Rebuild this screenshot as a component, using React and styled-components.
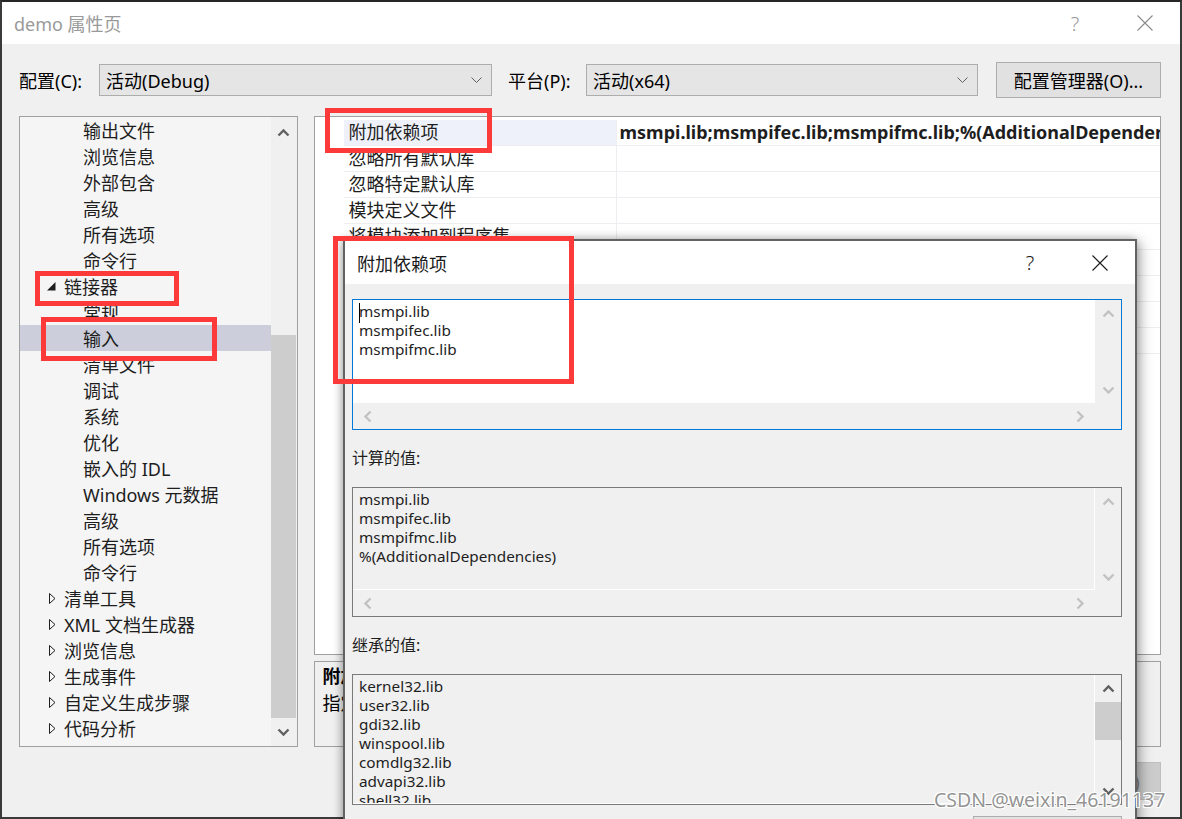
import React from 'react'
import styled, { createGlobalStyle } from 'styled-components'

const GlobalStyle = createGlobalStyle`
  html, body {
    margin: 0;
    padding: 0;
    width: 1182px;
    height: 819px;
    overflow: hidden;
    background: #2d2d2d;
  }
  body {
    font-family: "Noto Sans", "Noto Sans CJK SC", sans-serif;
    color: #000;
  }
`;

const treeItems = [
  { label: '输出文件', level: 1 },
  { label: '浏览信息', level: 1 },
  { label: '外部包含', level: 1 },
  { label: '高级', level: 1 },
  { label: '所有选项', level: 1 },
  { label: '命令行', level: 1 },
  { label: '链接器', level: 0, open: true },
  { label: '常规', level: 1 },
  { label: '输入', level: 1, selected: true },
  { label: '清单文件', level: 1 },
  { label: '调试', level: 1 },
  { label: '系统', level: 1 },
  { label: '优化', level: 1 },
  { label: '嵌入的 IDL', level: 1 },
  { label: 'Windows 元数据', level: 1 },
  { label: '高级', level: 1 },
  { label: '所有选项', level: 1 },
  { label: '命令行', level: 1 },
  { label: '清单工具', level: 0 },
  { label: 'XML 文档生成器', level: 0 },
  { label: '浏览信息', level: 0 },
  { label: '生成事件', level: 0 },
  { label: '自定义生成步骤', level: 0 },
  { label: '代码分析', level: 0 },
];

const gridRows = [
  { name: '附加依赖项', value: 'msmpi.lib;msmpifec.lib;msmpifmc.lib;%(AdditionalDependencies)', current: true },
  { name: '忽略所有默认库' },
  { name: '忽略特定默认库' },
  { name: '模块定义文件' },
  { name: '将模块添加到程序集' },
  { name: '嵌入托管资源文件' },
  { name: '强制符号引用' },
  { name: '延迟加载的 DLL' },
  { name: '程序集链接资源' },
];

const editLines = ['msmpi.lib', 'msmpifec.lib', 'msmpifmc.lib'];
const computedLines = ['msmpi.lib', 'msmpifec.lib', 'msmpifmc.lib', '%(AdditionalDependencies)'];
const inheritedLines = ['kernel32.lib', 'user32.lib', 'gdi32.lib', 'winspool.lib', 'comdlg32.lib', 'advapi32.lib', 'shell32.lib', 'ole32.lib'];

const marks = [
  { x: 325, y: 108, w: 167, h: 45 },
  { x: 35, y: 271, w: 144, h: 35 },
  { x: 41, y: 317, w: 176, h: 44 },
  { x: 333, y: 236, w: 241, h: 148 },
];

function Chevron({ dir, color }) {
  const paths = {
    up: 'M1.5 7.5 L6.5 2.5 L11.5 7.5',
    down: 'M1.5 2.5 L6.5 7.5 L11.5 2.5',
    left: 'M7.5 1.5 L2.5 6.5 L7.5 11.5',
    right: 'M2.5 1.5 L7.5 6.5 L2.5 11.5',
  };
  const horiz = dir === 'left' || dir === 'right';
  return (
    <svg width={horiz ? 10 : 13} height={horiz ? 13 : 10} viewBox={horiz ? '0 0 10 13' : '0 0 13 10'}>
      <path d={paths[dir]} fill="none" stroke={color} strokeWidth="2.4" />
    </svg>
  );
}

function CloseGlyph({ color }) {
  return (
    <svg width="16" height="16" viewBox="0 0 16 16">
      <path d="M0.5 0.5 L15.5 15.5 M15.5 0.5 L0.5 15.5" stroke={color} strokeWidth="1.1" fill="none" />
    </svg>
  );
}

function ComboArrow() {
  return (
    <svg width="11" height="7" viewBox="0 0 11 7">
      <path d="M0.5 0.5 L5.5 5.5 L10.5 0.5" stroke="#606060" strokeWidth="1" fill="none" />
    </svg>
  );
}

function TreeArrow({ open }) {
  if (open) {
    return (
      <svg width="9" height="9" viewBox="0 0 9 9">
        <path d="M0 8.5 L8.5 8.5 L8.5 0 Z" fill="#1e1e1e" />
      </svg>
    );
  }
  return (
    <svg width="7" height="11" viewBox="0 0 7 11">
      <path d="M0.5 0.5 L6 5.5 L0.5 10.5 Z" fill="none" stroke="#1e1e1e" strokeWidth="1" />
    </svg>
  );
}

function ValueBox({ focused, disabled, lines, textHeight, hscroll, thumb, arrowColor }) {
  return (
    <Box $focused={focused} $disabled={disabled} $textHeight={textHeight} $hscroll={hscroll}>
      <BoxText $disabled={disabled}>
        {focused && <Caret />}
        {lines.map((l, i) => <div key={i}>{l}</div>)}
      </BoxText>
      <VScroll>
        <VArrow><Chevron dir="up" color={arrowColor} /></VArrow>
        {thumb ? <BoxThumb style={{ height: thumb }} /> : null}
        <VSpacer />
        <VArrow><Chevron dir="down" color={arrowColor} /></VArrow>
      </VScroll>
      {hscroll && (
        <>
          <HScroll>
            <Chevron dir="left" color="#c2c2c2" />
            <Chevron dir="right" color="#c2c2c2" />
          </HScroll>
          <Corner />
        </>
      )}
    </Box>
  );
}

function App() {
  return (
    <Screen>
      <GlobalStyle />
      <Window>
        <TitleBar>
          <TitleText>demo 属性页</TitleText>
          <TitleButton $inactive>?</TitleButton>
          <TitleButton><CloseGlyph color="#8a8a8a" /></TitleButton>
        </TitleBar>
        <Body>
          <ConfigRow>
            <FieldLabel $w={80}>配置(C):</FieldLabel>
            <Combo $w={393}>
              <span>活动(Debug)</span>
              <ComboArrow />
            </Combo>
            <FieldLabel $w={78} $gap={16}>平台(P):</FieldLabel>
            <Combo $w={392}>
              <span>活动(x64)</span>
              <ComboArrow />
            </Combo>
            <PushButton $w={165} $h={36} $ml={18}>配置管理器(O)...</PushButton>
          </ConfigRow>
          <Content>
            <Tree>
              <TreeList>
                {treeItems.map((item, i) => (
                  <TreeItem key={i} $level={item.level} $selected={item.selected}>
                    {item.level === 0 && (
                      <ArrowSlot $open={item.open}><TreeArrow open={item.open} /></ArrowSlot>
                    )}
                    {item.label}
                  </TreeItem>
                ))}
              </TreeList>
              <TreeScroll>
                <TreeScrollBtn $h={32}><Chevron dir="up" color="#606060" /></TreeScrollBtn>
                <TreeThumb $top={186} $h={383} />
                <TreeScrollBtn $grow><Chevron dir="down" color="#606060" /></TreeScrollBtn>
              </TreeScroll>
            </Tree>
            <RightColumn>
              <Grid>
                {gridRows.map((row, i) => (
                  <GridRow key={i}>
                    <Gutter />
                    <NameCell $current={row.current}>{row.name}</NameCell>
                    <ValueCell>{row.value || ''}</ValueCell>
                  </GridRow>
                ))}
              </Grid>
              <Description>
                <DescTitle>附加依赖项</DescTitle>
                <DescText>指定要添加到链接命令行的附加项。[例如 kernel32.lib]</DescText>
              </Description>
            </RightColumn>
          </Content>
          <ButtonRow>
            <PushButton $w={101} $h={38}>确定</PushButton>
            <PushButton $w={101} $h={38}>取消</PushButton>
            <PushButton $w={101} $h={38} $disabled>应用(A)</PushButton>
          </ButtonRow>
        </Body>
      </Window>

      <Dialog>
        <DialogTitleBar>
          <DialogTitle>附加依赖项</DialogTitle>
          <TitleButton $dark>?</TitleButton>
          <TitleButton><CloseGlyph color="#1a1a1a" /></TitleButton>
        </DialogTitleBar>
        <DialogBody>
          <ValueBox focused lines={editLines} textHeight={103} hscroll arrowColor="#c2c2c2" />
          <SectionLabel>计算的值:</SectionLabel>
          <ValueBox disabled lines={computedLines} textHeight={102} hscroll arrowColor="#c2c2c2" />
          <SectionLabel>继承的值:</SectionLabel>
          <ValueBox disabled lines={inheritedLines} textHeight={129} thumb={38} arrowColor="#606060" />
          <DialogButtons>
            <PushButton $w={149} $h={38}>确定</PushButton>
          </DialogButtons>
        </DialogBody>
      </Dialog>

      {marks.map((m, i) => (
        <Mark key={i} style={{ left: m.x, top: m.y, width: m.w, height: m.h }} />
      ))}

      <Watermark>CSDN @weixin_46191137</Watermark>
    </Screen>
  );
}

export default App

const Screen = styled.div`
    position: relative;
    width: 1182px;
    height: 819px;
    overflow: hidden;
`;
const Window = styled.div`
    box-sizing: border-box;
    width: 1182px;
    height: 819px;
    border: 2px solid #3a3a3a;
    border-top-color: #262626;
    background: #f0f0f0;
    display: flex;
    flex-direction: column;
`;
const TitleBar = styled.div`
    height: 42px;
    background: #fff;
    display: flex;
    align-items: center;
    padding-left: 12px;
    flex-shrink: 0;
`;
const TitleText = styled.div`
    flex: 1;
    font-size: 18px;
    color: #9a9a9a;
`;
const TitleButton = styled.div`
    width: 70px;
    height: 100%;
    display: flex;
    align-items: center;
    justify-content: center;
    font-size: 20px;
    font-weight: 300;
    color: ${p => p.$dark ? '#1a1a1a' : '#9a9a9a'};
`;
const Body = styled.div`
    flex: 1;
    display: flex;
    flex-direction: column;
    padding: 18px 19px 0 17px;
`;
const ConfigRow = styled.div`
    display: flex;
    align-items: center;
    height: 36px;
`;
const FieldLabel = styled.div`
    width: ${p => p.$w}px;
    margin-left: ${p => p.$gap || 0}px;
    font-size: 18px;
    flex-shrink: 0;
`;
const Combo = styled.div`
    box-sizing: border-box;
    width: ${p => p.$w}px;
    height: 32px;
    background: #e5e5e5;
    border: 1px solid #adadad;
    display: flex;
    align-items: center;
    justify-content: space-between;
    padding: 0 9px 0 6px;
    font-size: 18px;
    flex-shrink: 0;
`;
const PushButton = styled.div`
    box-sizing: border-box;
    width: ${p => p.$w}px;
    height: ${p => p.$h}px;
    margin-left: ${p => p.$ml || 0}px;
    background: ${p => p.$disabled ? '#cccccc' : '#e1e1e1'};
    border: 1px solid ${p => p.$disabled ? '#bfbfbf' : '#adadad'};
    color: ${p => p.$disabled ? '#838383' : '#000'};
    display: flex;
    align-items: center;
    justify-content: center;
    font-size: 18px;
    flex-shrink: 0;
`;
const Content = styled.div`
    display: flex;
    gap: 16px;
    height: 631px;
    margin-top: 18px;
`;
const Tree = styled.div`
    box-sizing: border-box;
    width: 279px;
    border: 1px solid #a0a0a0;
    background: #f5f5f5;
    display: flex;
`;
const TreeList = styled.div`
    flex: 1;
    padding-top: 0;
    overflow: hidden;
`;
const TreeItem = styled.div`
    height: 26px;
    display: flex;
    align-items: center;
    padding-left: ${p => p.$level === 0 ? 26 : 63}px;
    font-size: 18px;
    color: #1e1e1e;
    white-space: nowrap;
    background: ${p => p.$selected ? '#cccedb' : 'transparent'};
`;
const ArrowSlot = styled.span`
    width: 18px;
    display: flex;
    align-items: center;
    padding-left: ${p => p.$open ? 1 : 3}px;
    box-sizing: border-box;
`;
const TreeScroll = styled.div`
    width: 26px;
    background: #f0f0f0;
    display: flex;
    flex-direction: column;
`;
const TreeScrollBtn = styled.div`
    height: ${p => p.$h ? `${p.$h}px` : 'auto'};
    flex: ${p => p.$grow ? 1 : 'none'};
    display: flex;
    align-items: center;
    justify-content: center;
`;
const TreeThumb = styled.div`
    margin: ${p => p.$top}px 1px 0 0;
    height: ${p => p.$h}px;
    background: #cdcdcd;
`;
const RightColumn = styled.div`
    width: 849px;
    display: flex;
    flex-direction: column;
    gap: 6px;
`;
const Grid = styled.div`
    box-sizing: border-box;
    height: 539px;
    border: 1px solid #a0a0a0;
    background: #fff;
    padding-top: 3px;
    overflow: hidden;
`;
const GridRow = styled.div`
    display: grid;
    grid-template-columns: 29px 272px 1fr;
    height: 26px;
`;
const Gutter = styled.div`
    background: #fff;
`;
const NameCell = styled.div`
    box-sizing: border-box;
    padding-left: 5px;
    font-size: 18px;
    line-height: 25px;
    color: #1e1e1e;
    white-space: nowrap;
    overflow: hidden;
    border-bottom: 1px solid #eeeef2;
    background: ${p => p.$current ? '#eef1f9' : '#fff'};
`;
const ValueCell = styled.div`
    box-sizing: border-box;
    padding-left: 3px;
    font-size: 18px;
    font-weight: 700;
    line-height: 25px;
    color: #1e1e1e;
    white-space: nowrap;
    overflow: hidden;
    border-bottom: 1px solid #eeeef2;
    border-left: 1px solid #eeeef2;
`;
const Description = styled.div`
    box-sizing: border-box;
    height: 86px;
    border: 1px solid #a0a0a0;
    background: #f0f0f0;
    padding: 1px 8px;
    font-size: 18px;
    line-height: 27px;
    white-space: nowrap;
    overflow: hidden;
`;
const DescTitle = styled.div`
    font-weight: 700;
`;
const DescText = styled.div``;
const ButtonRow = styled.div`
    display: flex;
    justify-content: flex-end;
    gap: 11px;
    margin-top: 15px;
`;
const Dialog = styled.div`
    position: absolute;
    left: 343px;
    top: 239px;
    width: 794px;
    height: 640px;
    box-sizing: border-box;
    border: 2px solid #626262;
    background: #f0f0f0;
    box-shadow: 3px 3px 12px rgba(0, 0, 0, 0.35), -2px 0 8px rgba(0, 0, 0, 0.2);
    display: flex;
    flex-direction: column;
`;
const DialogTitleBar = styled.div`
    height: 43px;
    background: #fff;
    display: flex;
    align-items: center;
    padding-left: 12px;
    flex-shrink: 0;
`;
const DialogTitle = styled.div`
    flex: 1;
    font-size: 18px;
    color: #1a1a1a;
`;
const DialogBody = styled.div`
    padding: 15px 13px 0 7px;
    display: flex;
    flex-direction: column;
`;
const Box = styled.div`
    box-sizing: border-box;
    border: 1px solid ${p => p.$focused ? '#0078d7' : '#7a7a7a'};
    background: #f0f0f0;
    display: grid;
    grid-template-columns: 1fr 26px;
    grid-template-rows: ${p => p.$textHeight}px ${p => p.$hscroll ? '26px' : ''};
`;
const BoxText = styled.div`
    position: relative;
    box-sizing: border-box;
    background: ${p => p.$disabled ? '#f0f0f0' : '#fff'};
    border-right: 1px solid ${p => p.$disabled ? '#fff' : 'transparent'};
    border-bottom: 1px solid ${p => p.$disabled ? '#fff' : 'transparent'};
    padding: 2px 6px 0;
    font-size: 15.3px;
    line-height: 19px;
    color: #1e1e1e;
    overflow: hidden;
`;
const Caret = styled.div`
    position: absolute;
    left: 6px;
    top: 3px;
    width: 1px;
    height: 20px;
    background: #000;
`;
const VScroll = styled.div`
    display: flex;
    flex-direction: column;
    align-items: center;
`;
const VArrow = styled.div`
    height: 27px;
    width: 100%;
    display: flex;
    align-items: center;
    justify-content: center;
`;
const BoxThumb = styled.div`
    width: 100%;
    background: #cdcdcd;
`;
const VSpacer = styled.div`
    flex: 1;
`;
const HScroll = styled.div`
    display: flex;
    align-items: center;
    justify-content: space-between;
    padding: 0 10px;
`;
const Corner = styled.div``;
const SectionLabel = styled.div`
    font-size: 16px;
    line-height: 22px;
    color: #1e1e1e;
    margin: 17px 0 18px;
`;
const DialogButtons = styled.div`
    display: flex;
    justify-content: flex-end;
    margin-top: 11px;
`;
const Mark = styled.div`
    position: absolute;
    box-sizing: border-box;
    border: 5px solid #fc3a3a;
`;
const Watermark = styled.div`
    position: absolute;
    left: 934px;
    top: 786px;
    font-size: 19.5px;
    color: rgba(135, 135, 135, 0.9);
    text-shadow: 1px 1px 0 #fff, -1px -1px 0 #fff, 1px -1px 0 #fff, -1px 1px 0 #fff;
    white-space: nowrap;
`;
